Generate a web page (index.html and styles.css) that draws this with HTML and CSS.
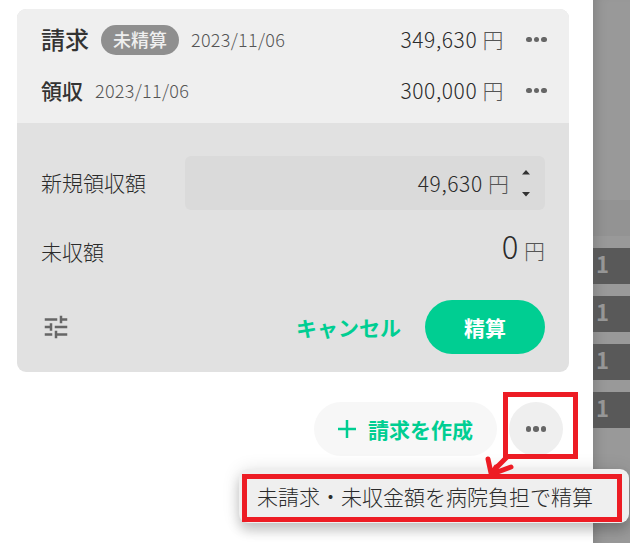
FILE: index.html
```html
<!DOCTYPE html>
<html lang="ja">
<head>
    <meta charset="UTF-8">
    <meta name="viewport" content="width=device-width, initial-scale=1.0">
    <title>請求・領収</title>
    <link rel="stylesheet" href="styles.css">
</head>
<body>
    <div class="screen">
        <main class="panel">
            <section class="card">
                <div class="records">
                    <div class="record">
                        <h2 class="record-title large">請求</h2>
                        <span class="badge">未精算</span>
                        <span class="date">2023/11/06</span>
                        <span class="amount">349,630 <span class="yen">円</span></span>
                        <button class="dots" aria-label="メニュー"><i></i><i></i><i></i></button>
                    </div>
                    <div class="record">
                        <h2 class="record-title">領収</h2>
                        <span class="date">2023/11/06</span>
                        <span class="amount">300,000 <span class="yen">円</span></span>
                        <button class="dots" aria-label="メニュー"><i></i><i></i><i></i></button>
                    </div>
                </div>
                <div class="form">
                    <div class="form-row">
                        <span class="label">新規領収額</span>
                        <div class="field">
                            <span class="field-value">49,630 <span class="yen">円</span></span>
                            <svg class="stepper" width="8" height="27" viewBox="0 0 8 27">
                                <path d="M0 4.5L4 0L8 4.5ZM0 22L4 26.5L8 22Z"/>
                            </svg>
                        </div>
                    </div>
                    <div class="form-row rest">
                        <span class="label">未収額</span>
                        <span class="rest-amount"><span class="zero">0</span> <span class="yen">円</span></span>
                    </div>
                    <div class="buttons">
                        <svg class="tune" width="30" height="30" viewBox="0 0 24 24">
                            <path d="M3 17v2h6v-2H3zM3 5v2h10V5H3zm10 16v-2h8v-2h-8v-2h-2v6h2zM7 9v2H3v2h4v2h2V9H7zm14 4v-2H11v2h10zm-6-4h2V7h4V5h-4V3h-2v6z"/>
                        </svg>
                        <button class="btn-cancel">キャンセル</button>
                        <button class="btn-submit">精算</button>
                    </div>
                </div>
            </section>
            <div class="actions">
                <button class="btn-create">
                    <svg width="18" height="18" viewBox="0 0 18 18"><path d="M9 0V18M0 9H18"/></svg>
                    請求を作成
                </button>
                <button class="btn-more dots" aria-label="その他"><i></i><i></i><i></i></button>
            </div>
        </main>
        <aside class="backdrop">
            <div class="band"></div>
            <div class="bar">1</div>
            <div class="bar">1</div>
            <div class="bar">1</div>
            <div class="bar">1</div>
        </aside>
        <div class="menu">未請求・未収金額を病院負担で精算</div>
        <div class="mark mark-button"></div>
        <div class="mark mark-menu"></div>
        <svg class="arrow" width="32" height="26" viewBox="0 0 32 26">
            <path d="M24 2L9 17M4 5L7 19M27 13L8 20L12 13"/>
        </svg>
    </div>
</body>
</html>
```
FILE: styles.css
```css
* {
    box-sizing: border-box;
}
body {
    margin: 0;
    font-family: "Noto Sans CJK JP", sans-serif;
    font-weight: 300;
    font-size: 21px;
    line-height: 30px;
    color: #2b2b2b;
    background-color: #fff;
}
button {
    font: inherit;
    border: none;
    padding: 0;
    background: none;
    cursor: pointer;
}
.screen {
    position: relative;
    display: flex;
    width: 630px;
    height: 543px;
    overflow: hidden;
}
.panel {
    width: 593px;
    padding: 9px 24px 0 17px;
}
.card {
    height: 363px;
    border-radius: 9px;
    overflow: hidden;
    background-color: #e1e1e1;
}
.records {
    height: 114px;
    padding: 5px 22.5px 0 24px;
    background-color: #efefef;
}
.record {
    display: flex;
    align-items: center;
    height: 51px;
}
.record-title,
.date,
.amount {
    padding-bottom: 2px;
}
.record-title {
    margin: 0 12px 0 0;
    font-size: 21px;
    font-weight: 500;
    color: #333;
}
.record-title.large {
    font-size: 24px;
}
.badge {
    width: 78px;
    height: 30px;
    margin-right: 12px;
    border-radius: 15px;
    font-size: 18px;
    line-height: 29px;
    font-weight: 500;
    text-align: center;
    color: #efefef;
    background-color: #8f8f8f;
}
.date {
    font-size: 18px;
    letter-spacing: 0.3px;
    color: #555;
}
.amount,
.field-value {
    letter-spacing: 0.6px;
}
.amount {
    margin-left: auto;
    margin-right: 22.5px;
}
.yen {
    letter-spacing: 0;
    color: #555;
}
.dots {
    display: flex;
    align-items: center;
    justify-content: center;
    gap: 2px;
}
.dots i {
    width: 5.5px;
    height: 5.5px;
    border-radius: 50%;
    background-color: #666;
}
.form {
    padding: 33px 24px 0;
}
.form-row {
    display: flex;
    align-items: center;
    justify-content: space-between;
}
.label {
    padding-bottom: 2px;
}
.field {
    display: flex;
    align-items: center;
    justify-content: flex-end;
    gap: 13px;
    width: 360px;
    height: 54px;
    padding-right: 15px;
    border-radius: 6px;
    background-color: #dadada;
}
.stepper {
    fill: #333;
}
.rest {
    height: 84px;
}
.zero {
    font-size: 31px;
    margin-right: 1px;
}
.rest-amount {
    padding-bottom: 8px;
}
.buttons {
    display: flex;
    align-items: center;
    padding-top: 6px;
}
.tune {
    fill: #666;
}
.btn-cancel {
    margin-left: auto;
    margin-right: 24px;
    font-weight: 700;
    color: #00ce92;
}
.btn-submit {
    width: 120px;
    height: 54px;
    border-radius: 27px;
    font-weight: 700;
    color: #fff;
    background-color: #00ce92;
}
.actions {
    display: flex;
    justify-content: flex-end;
    gap: 12px;
    padding: 30px 6px 0 0;
}
.btn-create {
    display: flex;
    align-items: center;
    justify-content: center;
    gap: 12px;
    width: 183px;
    height: 54px;
    border-radius: 27px;
    font-weight: 700;
    color: #00ce92;
    background-color: #f7f7f7;
}
.btn-create svg {
    fill: none;
    stroke: #00ce92;
    stroke-width: 2.5;
}
.btn-more {
    width: 54px;
    height: 54px;
    border-radius: 50%;
    background-color: #efefef;
}
.backdrop {
    width: 37px;
    padding-top: 200px;
    background: #999;
    box-shadow: inset 12px 0 12px -9px rgba(0,0,0,0.15);
}
.band {
    height: 36px;
    margin-bottom: 12px;
    background-color: rgba(0,0,0,0.035);
}
.bar {
    height: 36px;
    margin-bottom: 12px;
    padding-left: 3px;
    font-size: 22px;
    line-height: 30px;
    font-weight: 700;
    color: #969696;
    background-color: #595959;
}
.menu {
    position: absolute;
    left: 239px;
    top: 469px;
    width: 390px;
    height: 54px;
    padding-left: 18px;
    border-radius: 9px;
    line-height: 54px;
    background-color: #efefef;
    box-shadow: 0 8px 12px rgba(0,0,0,0.18), 0 1px 18px rgba(0,0,0,0.12);
}
.mark {
    position: absolute;
    border: 5px solid #ed1c24;
}
.mark-button {
    left: 503px;
    top: 392px;
    width: 75px;
    height: 67px;
}
.mark-menu {
    left: 242px;
    top: 474px;
    width: 380px;
    height: 48px;
}
.arrow {
    position: absolute;
    left: 484px;
    top: 454px;
    fill: none;
    stroke: #ed1c24;
    stroke-width: 5;
    stroke-linecap: round;
}
```
